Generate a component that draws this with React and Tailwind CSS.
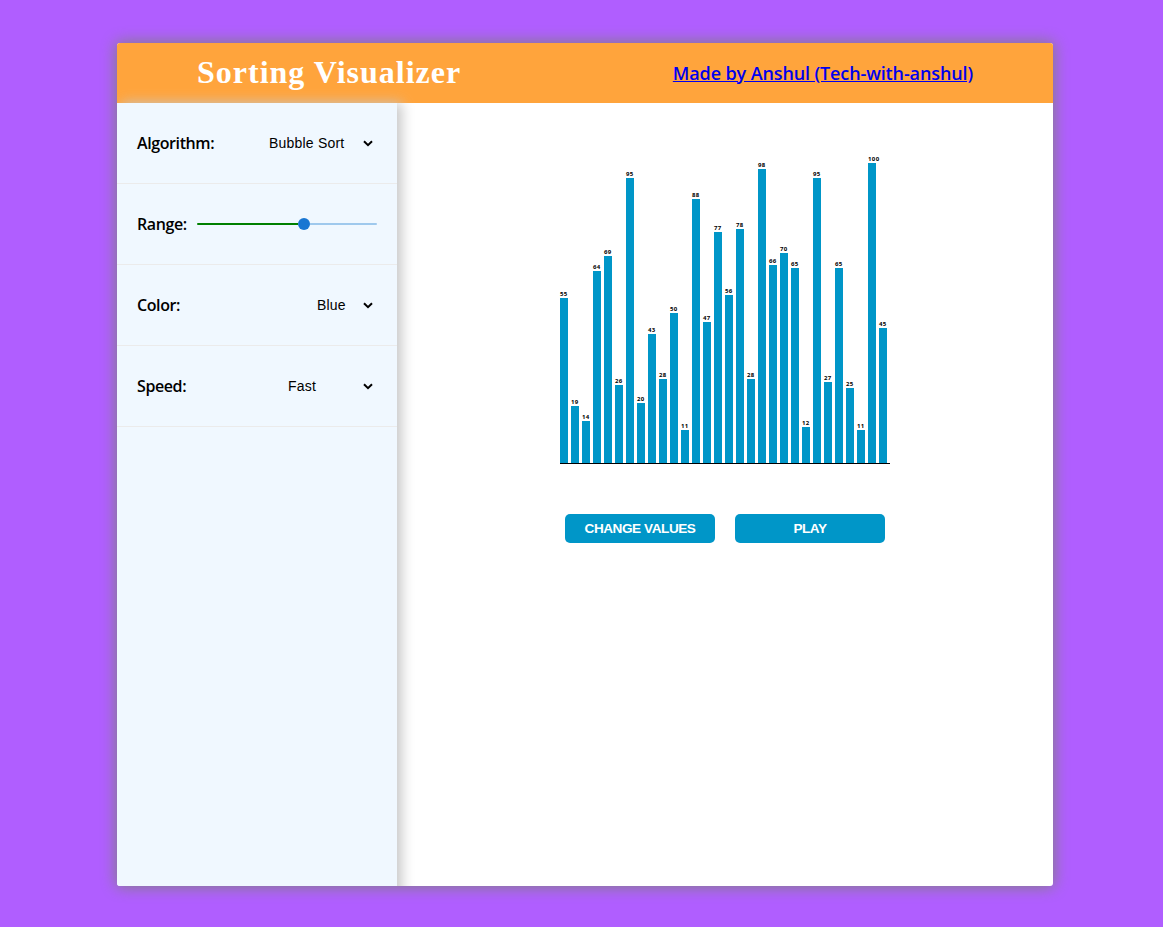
import React from "react";

const values = [
  55, 19, 14, 64, 69, 26, 95, 20, 43, 28, 50, 11, 88, 47, 77, 56, 78, 28, 98, 66,
  70, 65, 12, 95, 27, 65, 25, 11, 100, 45,
];

function Chevron() {
  return (
    <svg width="10" height="7" viewBox="0 0 10 7" className="block" aria-hidden="true">
      <path d="M1 1.2 5 5.2 9 1.2" fill="none" stroke="#000" strokeWidth="2" />
    </svg>
  );
}

function Row({ label, children }) {
  return (
    <div className="flex h-[81px] items-center justify-between border-b border-[#ebebeb] px-5">
      <span className="whitespace-nowrap font-['Open_Sans',sans-serif] text-[16px] font-semibold leading-[22px] tracking-[-0.4px] text-black">
        {label}
      </span>
      {children}
    </div>
  );
}

function Select({ value, widthClass }) {
  return (
    <button
      type="button"
      className={`flex items-center justify-between pr-1 font-['Liberation_Sans',sans-serif] text-[14px] leading-[18px] tracking-[0.2px] text-black ${widthClass}`}
    >
      <span className="whitespace-nowrap">{value}</span>
      <Chevron />
    </button>
  );
}

function Bar({ value }) {
  return (
    <div className="flex w-2 flex-col">
      <span className="h-[9px] w-2 whitespace-nowrap pt-px font-['Open_Sans',sans-serif] text-[6px] font-bold leading-[9px] tracking-[0.4px] text-black">
        {value}
      </span>
      <div className="w-2 bg-[#0096c8]" style={{ height: value * 3 }} />
    </div>
  );
}

function Action({ children }) {
  return (
    <button
      type="button"
      className="h-[29px] w-[150px] rounded-[5px] bg-[#0096c8] font-['Liberation_Sans',sans-serif] text-[13.6px] font-bold leading-[29px] tracking-[-0.45px] text-white"
    >
      {children}
    </button>
  );
}

export default function App() {
  return (
    <div className="h-[927px] w-full overflow-hidden bg-[#b05eff] pl-[117px] pt-[43px]">
      <div className="h-[843px] w-[936px] rounded-[3px] shadow-[0_0_15px_1px_gray]">
        <div className="flex h-full flex-col overflow-hidden rounded-[3px] bg-white">
          <header className="flex h-[60px] shrink-0 items-center justify-between bg-[#ffa43c] px-20">
            <h1 className="whitespace-nowrap pb-0.5 font-['Liberation_Serif',serif] text-[32px] font-bold leading-[58px] tracking-[1px] text-white">
              Sorting Visualizer
            </h1>
            <a
              href="#"
              className="whitespace-nowrap font-['Open_Sans',sans-serif] text-[18px] font-semibold tracking-[-0.12px] text-[#0000ee] underline"
            >
              Made by Anshul (Tech-with-anshul)
            </a>
          </header>
          <div className="flex min-h-0 flex-1">
            <aside className="relative h-[843px] w-[280px] shrink-0 bg-[#f0f8ff] shadow-[5px_0_12px_#c8c8c8]">
              <Row label="Algorithm:">
                <Select value="Bubble Sort" widthClass="w-[108px]" />
              </Row>
              <Row label="Range:">
                <div className="flex h-3 w-[180px] items-center">
                  <div className="h-0.5 w-[101px] rounded-l-[1px] bg-[#008000]" />
                  <div className="size-3 rounded-full bg-[#1976d2]" />
                  <div className="h-0.5 flex-1 rounded-r-[1px] bg-[#9fc9ed]" />
                </div>
              </Row>
              <Row label="Color:">
                <Select value="Blue" widthClass="w-[60px]" />
              </Row>
              <Row label="Speed:">
                <Select value="Fast" widthClass="w-[89px]" />
              </Row>
            </aside>
            <main className="flex flex-1 flex-col items-center pt-[51px]">
              <div className="flex h-[310px] w-[330px] items-end gap-[3px] border-b border-black">
                {values.map((value, i) => (
                  <Bar key={i} value={value} />
                ))}
              </div>
              <div className="mt-[50px] flex gap-5">
                <Action>CHANGE VALUES</Action>
                <Action>PLAY</Action>
              </div>
            </main>
          </div>
        </div>
      </div>
    </div>
  );
}
